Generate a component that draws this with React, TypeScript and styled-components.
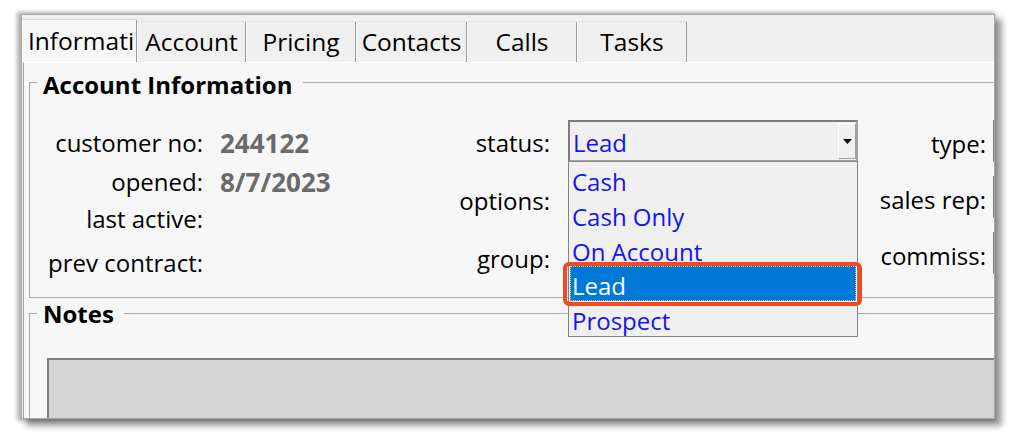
import React from "react"
import styled, { createGlobalStyle } from "styled-components"

const GlobalStyle = createGlobalStyle`
  html, body {
    margin: 0;
    background: #ffffff;
  }
  body {
    font-family: "Open Sans", "Noto Sans", sans-serif;
    color: #000;
  }
  #root {
    height: 433px;
    box-sizing: border-box;
    padding: 14px 0 0 21px;
    overflow: hidden;
  }
`

const Window = styled.div`
  width: 974px;
  height: 405px;
  box-sizing: border-box;
  display: flex;
  flex-direction: column;
  background: #f0f0f0;
  border: 1px solid #a8a8a8;
  overflow: hidden;
  box-shadow: -2px 0 4px 2px rgba(0, 0, 0, 0.3), 6px 6px 6px 1px rgba(0, 0, 0, 0.38);
`

const TabBar = styled.div`
  height: 47px;
  flex: none;
  display: flex;
  align-items: flex-end;
`

const Tab = styled.div<{ $width: number; $active?: boolean; $align?: string }>`
  width: ${(p) => p.$width}px;
  height: ${(p) => (p.$active ? 43 : 41)}px;
  box-sizing: border-box;
  flex: none;
  display: flex;
  align-items: center;
  justify-content: ${(p) => p.$align || "center"};
  padding-left: ${(p) => (p.$align ? 5 : 0)}px;
  background: ${(p) => (p.$active ? "#f7f7f7" : "#f0f0f0")};
  border-top: 1px solid ${(p) => (p.$active ? "#d0d0d0" : "#e2e2e2")};
  border-left: 1px solid #ffffff;
  border-right: 1px solid #9a9a9a;
  border-radius: 2px 2px 0 0;
  font-size: 24.5px;
  line-height: 30px;
  white-space: nowrap;
  overflow: hidden;
`

const Page = styled.div`
  flex: 1;
  margin-left: 1px;
  padding-left: 5px;
  background: #f7f7f7;
  border-top: 1px solid #ffffff;
  border-left: 1px solid #a0a0a0;
  overflow: hidden;
`

const GroupBox = styled.fieldset<{ $offset: number }>`
  width: 1200px;
  margin: ${(p) => p.$offset}px 0 0 0;
  padding: 0;
  min-width: 0;
  border: 1px solid #a9a9a9;
`

const Legend = styled.legend<{ $top: number }>`
  margin-left: 7px;
  padding: ${(p) => p.$top}px 10px 0 6px;
  font-size: 24px;
  font-weight: 700;
  line-height: 30px;
`

const Fields = styled.div`
  height: 197px;
  box-sizing: border-box;
  padding-top: 20px;
  display: flex;
  align-items: flex-start;
`

const Column = styled.div<{
  $label: number
  $gap: number
  $field: number
  $rows: string
  $rowGap: number
  $top?: number
  $align?: string
}>`
  flex: none;
  display: grid;
  grid-template-columns: ${(p) => p.$label}px ${(p) => p.$field}px;
  grid-template-rows: ${(p) => p.$rows};
  grid-auto-rows: 42px;
  column-gap: ${(p) => p.$gap}px;
  row-gap: ${(p) => p.$rowGap}px;
  align-items: ${(p) => p.$align || "center"};
  padding-top: ${(p) => p.$top || 0}px;
`

const Label = styled.div<{ $shift?: number }>`
  text-align: right;
  font-size: 24px;
  line-height: 30px;
  white-space: nowrap;
  padding-top: ${(p) => p.$shift || 0}px;
`

const Value = styled.div`
  font-size: 26px;
  font-weight: 700;
  line-height: 30px;
  color: #6b6b6b;
  white-space: nowrap;
`

const TextBox = styled.div`
  height: 42px;
  box-sizing: border-box;
  background: #ffffff;
  border: 2px solid;
  border-color: #7a7a7a #dedede #dedede #7a7a7a;
`

const Select = styled.div`
  position: relative;
  height: 42px;
  box-sizing: border-box;
  display: flex;
  align-items: center;
  padding-left: 3px;
  background: #f0f0f0;
  border: 2px solid;
  border-color: #7c7c7c #a3a3a3 #a3a3a3 #7c7c7c;
  color: #1414f5;
  font-size: 24px;
  line-height: 30px;
`

const SelectText = styled.span`
  flex: 1;
  padding-top: 4px;
`

const ArrowButton = styled.div`
  width: 18px;
  align-self: stretch;
  margin: 1px 0;
  box-sizing: border-box;
  display: flex;
  align-items: center;
  justify-content: center;
  background: #f0f0f0;
  border-top: 1px solid #ffffff;
  border-left: 1px solid #ffffff;
  border-right: 1px solid #a0a0a0;
  border-bottom: 1px solid #a0a0a0;
`

const ListBox = styled.div`
  position: absolute;
  top: calc(100% + 1px);
  left: -2px;
  width: 290px;
  box-sizing: border-box;
  padding: 0 1px;
  background: #f0f0f0;
  border: 1px solid #828282;
  z-index: 2;
`

const Option = styled.div<{ $active?: boolean }>`
  position: relative;
  height: 34.8px;
  box-sizing: border-box;
  display: flex;
  align-items: center;
  padding: 5px 0 0 2px;
  font-size: 24px;
  line-height: 30px;
  white-space: nowrap;
  color: ${(p) => (p.$active ? "#ffffff" : "#1414f5")};
  background: ${(p) => (p.$active ? "#0078d7" : "transparent")};
  outline: ${(p) => (p.$active ? "1px dotted #e8c27a" : "none")};
  outline-offset: -1px;
`

const Highlight = styled.span`
  position: absolute;
  top: -4px;
  bottom: -5px;
  left: -7px;
  right: -6px;
  border: 4px solid #f04a23;
  border-radius: 6px;
  pointer-events: none;
`

const NotesBody = styled.div`
  padding: 29px 0 0 17px;
`

const NotesArea = styled.div`
  width: 1100px;
  height: 200px;
  background: #d4d4d4;
  border-top: 2px solid #7f7f7f;
  border-left: 2px solid #7f7f7f;
`

const tabs = [
  { label: "Informati", width: 115, active: true },
  { label: "Account", width: 109 },
  { label: "Pricing", width: 110 },
  { label: "Contacts", width: 111 },
  { label: "Calls", width: 110 },
  { label: "Tasks", width: 110 },
]

const statusOptions = ["Cash", "Cash Only", "On Account", "Lead", "Prospect"]

const App = () => {
  return (
    <>
      <GlobalStyle />
      <Window>
        <TabBar>
          {tabs.map((t) => (
            <Tab key={t.label} $width={t.width} $active={t.active} $align={t.active ? "flex-start" : undefined}>
              {t.label}
            </Tab>
          ))}
        </TabBar>
        <Page>
          <GroupBox $offset={1}>
            <Legend $top={6}>Account Information</Legend>
            <Fields>
              <Column
                $label={173}
                $gap={17}
                $field={160}
                $rows="39px 37px 44px 30px"
                $rowGap={0}
                $top={8}
                $align="start"
              >
                <Label>customer no:</Label>
                <Value>244122</Value>
                <Label>opened:</Label>
                <Value>8/7/2023</Value>
                <Label>last active:</Label>
                <Value />
                <Label>prev contract:</Label>
                <Value />
              </Column>
              <Column $label={170} $gap={18} $field={290} $rows="42px" $rowGap={16}>
                <Label $shift={4}>status:</Label>
                <Select>
                  <SelectText>Lead</SelectText>
                  <ArrowButton>
                    <svg width="9" height="5" viewBox="0 0 9 5">
                      <polygon points="0,0 9,0 4.5,5" fill="#000" />
                    </svg>
                  </ArrowButton>
                  <ListBox>
                    {statusOptions.map((o) => (
                      <Option key={o} $active={o === "Lead"}>
                        {o}
                        {o === "Lead" && <Highlight />}
                      </Option>
                    ))}
                  </ListBox>
                </Select>
                <Label $shift={4}>options:</Label>
                <TextBox />
                <Label $shift={4}>group:</Label>
                <TextBox />
              </Column>
              <Column $label={128} $gap={7} $field={200} $rows="42px" $rowGap={14}>
                <Label $shift={5}>type:</Label>
                <TextBox />
                <Label $shift={5}>sales rep:</Label>
                <TextBox />
                <Label $shift={5}>commiss:</Label>
                <TextBox />
              </Column>
            </Fields>
          </GroupBox>
          <GroupBox $offset={-1}>
            <Legend $top={2}>Notes</Legend>
            <NotesBody>
              <NotesArea />
            </NotesBody>
          </GroupBox>
        </Page>
      </Window>
    </>
  )
}

export default App
